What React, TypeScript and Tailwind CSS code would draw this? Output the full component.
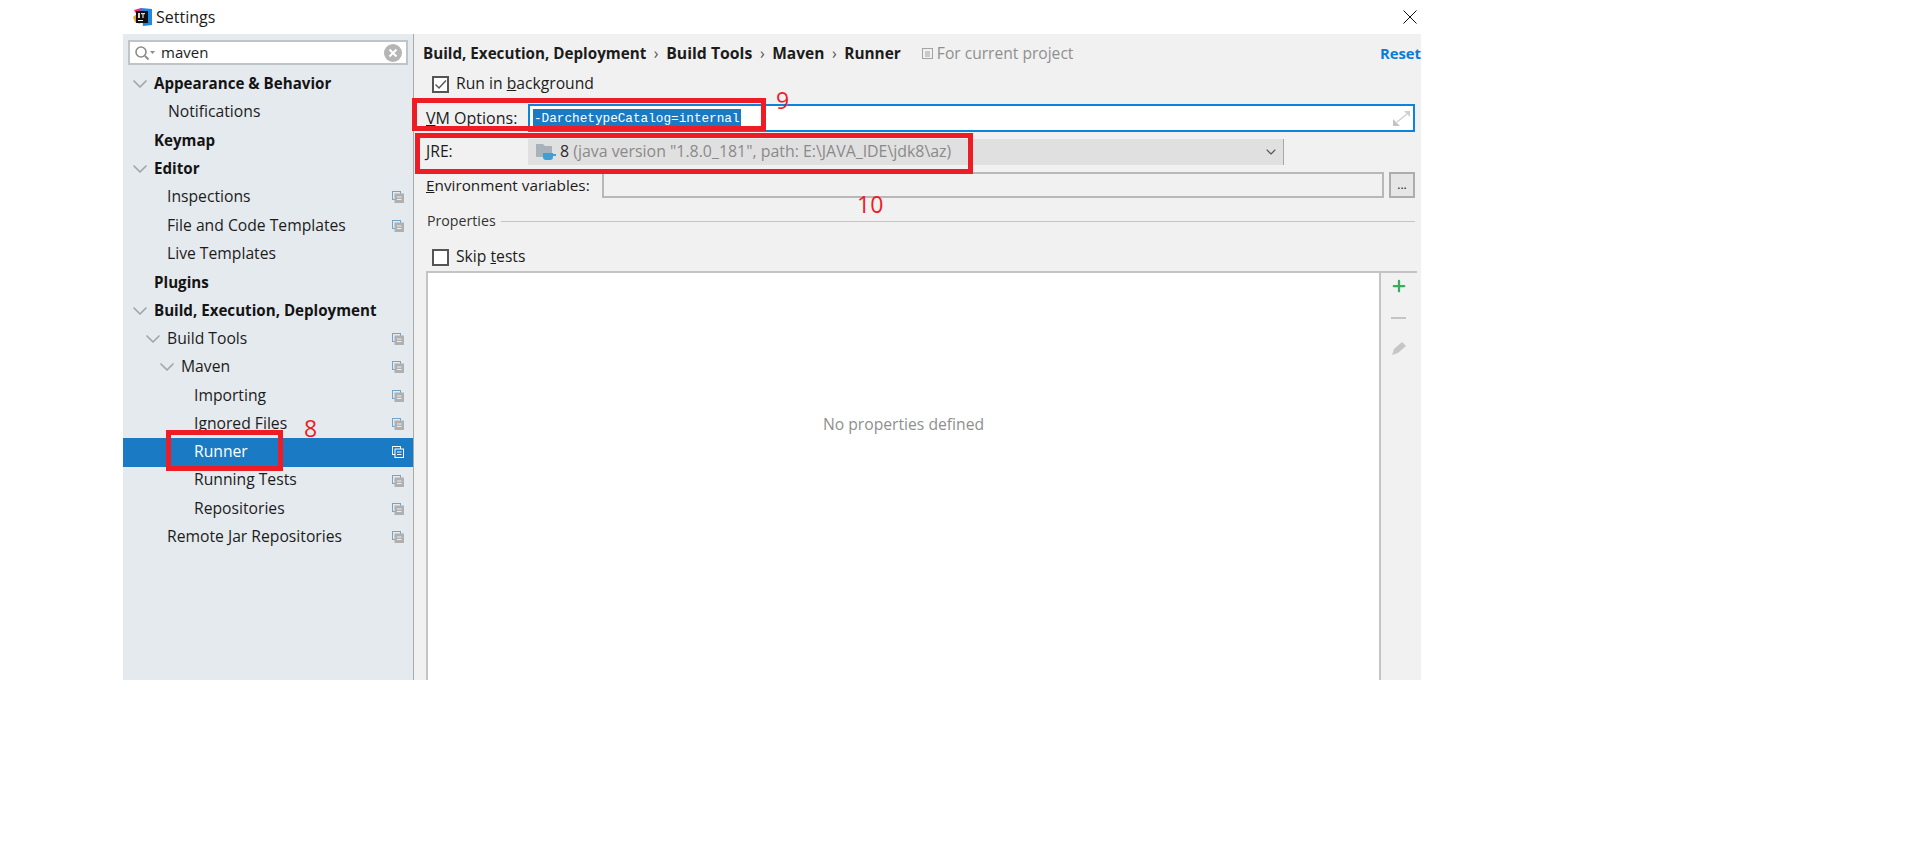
import { ChevronDown, Plus } from "lucide-react";

const font = { fontFamily: '"Open Sans", "Noto Sans", sans-serif' };

type Row = { label: string; indent: number; bold?: boolean; arrow?: boolean; icon?: boolean; selected?: boolean };

const rows: Row[] = [
  { label: "Appearance & Behavior", indent: 31, bold: true, arrow: true },
  { label: "Notifications", indent: 45 },
  { label: "Keymap", indent: 31, bold: true },
  { label: "Editor", indent: 31, bold: true, arrow: true },
  { label: "Inspections", indent: 44, icon: true },
  { label: "File and Code Templates", indent: 44, icon: true },
  { label: "Live Templates", indent: 44 },
  { label: "Plugins", indent: 31, bold: true },
  { label: "Build, Execution, Deployment", indent: 31, bold: true, arrow: true },
  { label: "Build Tools", indent: 44, arrow: true, icon: true },
  { label: "Maven", indent: 58, arrow: true, icon: true },
  { label: "Importing", indent: 71, icon: true },
  { label: "Ignored Files", indent: 71, icon: true },
  { label: "Runner", indent: 71, icon: true, selected: true },
  { label: "Running Tests", indent: 71, icon: true },
  { label: "Repositories", indent: 71, icon: true },
  { label: "Remote Jar Repositories", indent: 44, icon: true },
];

function ProjectIcon({ selected }: { selected?: boolean }) {
  return (
    <svg width="12" height="12" viewBox="0 0 12 12" className="shrink-0">
      <rect x="0.5" y="0.5" width="8" height="8" fill="none" stroke={selected ? "#ffffff" : "#6ea6d0"} strokeWidth="1" />
      <rect x="3" y="3" width="8.5" height="8.5" fill={selected ? "#1a7bc4" : "#b0b0b0"} stroke={selected ? "#ffffff" : "#b0b0b0"} strokeWidth="1" />
      <path d="M5 6h4.5M5 8.5h4.5" stroke={selected ? "#ffffff" : "#eeeeee"} strokeWidth="1" />
    </svg>
  );
}

function Checkbox({ checked }: { checked?: boolean }) {
  return (
    <span className="flex h-[17px] w-[17px] shrink-0 items-center justify-center border-2 border-[#555555] bg-white">
      {checked && (
        <svg width="13" height="13" viewBox="0 0 13 13">
          <path d="M1.5 6.5 L5 10 L12 2.5" fill="none" stroke="#555555" strokeWidth="1.4" />
        </svg>
      )}
    </span>
  );
}

function IdeaLogo() {
  return (
    <svg width="19" height="18" viewBox="0 0 19 18">
      <path d="M1 2 L8 0 L12 4 L5 9 Z" fill="#f0287a" />
      <path d="M0 9 L5 5 L7 16 L2 14 Z" fill="#f2a03a" />
      <path d="M8 0 L19 1 L19 17 L10 18 Z" fill="#1e88e5" />
      <rect x="3" y="3" width="12" height="12" fill="#111111" />
      <rect x="5" y="12" width="5" height="1" fill="#ffffff" />
      <path d="M5 5h2v5H5zM8 5h4v1.2h-1.4V10H9.4V6.2H8z" fill="#dddddd" />
    </svg>
  );
}

function JdkIcon() {
  return (
    <svg width="20" height="18" viewBox="0 0 20 18" className="shrink-0">
      <path d="M0 1 H7 L9 3 H16 V14 H0 Z" fill="#a8b2ba" />
      <path d="M7 10 H17 V14 Q17 17 14 17 H10 Q7 17 7 14 Z" fill="#3d9fd6" />
      <path d="M17 11 H20 V13 H17 Z" fill="#3d9fd6" />
    </svg>
  );
}

export default function App() {
  return (
    <div className="min-h-screen bg-white pl-[123px] text-[15.7px] text-[#1c1c1c]" style={font}>
      <div className="w-[1298px]">
        {/* Title bar */}
        <div className="flex h-[34px] items-center pl-[10px]">
          <IdeaLogo />
          <span className="ml-[4px] pb-[1px] text-[16px]">Settings</span>
          <svg width="14" height="14" viewBox="0 0 14 14" className="ml-auto mr-[4px] -mt-[1px]">
            <path d="M0.5 0.5 L13.5 13.5 M13.5 0.5 L0.5 13.5" stroke="#111111" strokeWidth="1" />
          </svg>
        </div>

        <div className="relative flex h-[646px] bg-[#f1f1f1]">
          {/* Sidebar */}
          <div className="w-[291px] shrink-0 border-r border-[#a9a9a9] bg-[#e5eaee]">
            <div className="mx-[5px] mt-[6px] mb-[5px] flex h-[25px] w-[280px] items-center border-2 border-[#bfc4c8] bg-white pl-[4px] pr-[4px]">
              <svg width="22" height="16" viewBox="0 0 22 16">
                <circle cx="7" cy="7" r="5" fill="none" stroke="#8b8b8b" strokeWidth="1.6" />
                <path d="M11 11 L14.5 14.5" stroke="#8b8b8b" strokeWidth="1.8" />
                <path d="M16 6 h5 l-2.5 3 z" fill="#8b8b8b" />
              </svg>
              <span className="ml-[5px] text-[15px] leading-none">maven</span>
              <span className="ml-auto flex h-[18px] w-[18px] items-center justify-center rounded-full bg-[#b5b5b5]">
                <svg width="10" height="10" viewBox="0 0 10 10">
                  <path d="M1.5 1.5 L8.5 8.5 M8.5 1.5 L1.5 8.5" stroke="#ffffff" strokeWidth="2" />
                </svg>
              </span>
            </div>
            {rows.map((r) => (
              <div
                key={r.label}
                className={`relative flex h-[28.33px] items-center pr-[9px] ${r.selected ? "bg-[#1a7bc4] text-white" : ""} ${r.bold ? "text-[15.15px] font-bold text-[#141414]" : ""}`}
                style={{ paddingLeft: r.indent }}
              >
                {r.arrow && (
                  <ChevronDown
                    size={24}
                    strokeWidth={1.7}
                    className="absolute top-[2px] text-[#a5a5a5]"
                    style={{ left: r.indent - 26 }}
                  />
                )}
                <span className="pb-[1px] whitespace-nowrap">{r.label}</span>
                {r.icon && (
                  <span className="ml-auto">
                    <ProjectIcon selected={r.selected} />
                  </span>
                )}
              </div>
            ))}
          </div>

          {/* Right panel */}
          <div className="flex min-w-0 flex-1 flex-col overflow-hidden">
            <div className="flex h-[38px] shrink-0 items-center pl-[9px] pt-[1px] whitespace-nowrap">
              <span className="text-[15.2px] font-bold">Build, Execution, Deployment</span>
              <span className="mx-[7.6px] text-[#555555]">›</span>
              <span className="text-[15.8px] font-bold">Build Tools</span>
              <span className="mx-[7.6px] text-[#555555]">›</span>
              <span className="text-[15.5px] font-bold">Maven</span>
              <span className="mx-[7.6px] text-[#555555]">›</span>
              <span className="text-[15.4px] font-bold">Runner</span>
              <svg width="12" height="12" viewBox="0 0 12 12" className="ml-[21px] mr-[3px]">
                <rect x="0.5" y="0.5" width="10" height="10" fill="none" stroke="#a4a4a4" />
                <path d="M3 4h5M3 6h5M3 8h5" stroke="#a4a4a4" />
              </svg>
              <span className="text-[15.6px] text-[#8f8f8f]">For current project</span>
              <span className="ml-auto text-[14.8px] font-bold text-[#0a7bd6]">Reset</span>
            </div>

            <div className="flex h-[24px] shrink-0 items-center pl-[18px]">
              <Checkbox checked />
              <span className="ml-[7px] pb-[1px]">
                Run in <u>b</u>ackground
              </span>
            </div>

            {/* VM options */}
            <div className="mt-[8px] flex h-[28px] shrink-0 items-center pl-[12px] pr-[6px]">
              <span className="w-[102px] shrink-0 pb-[1px] text-[16px]">
                <u>V</u>M Options:
              </span>
              <div className="flex h-full flex-1 items-center border-2 border-[#0a84dc] bg-white pl-[3px] pr-[3px]">
                <span
                  className="bg-[#1a7bc4] px-[1px] py-[1px] text-[12.7px] leading-[17px] text-white"
                  style={{ fontFamily: '"Liberation Mono", monospace' }}
                >
                  -DarchetypeCatalog=internal
                </span>
                <svg width="17" height="15" viewBox="0 0 17 15" className="ml-auto">
                  <path d="M0 15 V8 L7 15 Z" fill="#c4c4c4" />
                  <path d="M17 0 V6 L11 0 Z" fill="#d0d0d0" />
                  <path d="M4 11 L14 3" stroke="#d0d0d0" strokeWidth="1.4" />
                </svg>
              </div>
            </div>

            {/* JRE */}
            <div className="mt-[7px] flex h-[26px] shrink-0 items-center pl-[12px]">
              <span className="w-[102px] shrink-0 pb-[1px]">JRE:</span>
              <div className="flex h-full w-[756px] items-center border-r border-[#a8a8a8] bg-[#e0e0e0] pl-[8px] pr-[4px] text-[#8a8a8a]">
                <JdkIcon />
                <span className="ml-[4px] pb-[1px] text-[15.9px] whitespace-nowrap">
                  <span className="text-[#2a2a2a]">8</span> (java version "1.8.0_181", path: E:\JAVA_IDE\jdk8\az)
                </span>
                <ChevronDown size={16} strokeWidth={1.6} className="ml-auto text-[#555555]" />
              </div>
            </div>

            {/* Environment variables */}
            <div className="mt-[7px] flex h-[26px] shrink-0 items-center pl-[12px] pr-[6px]">
              <span className="w-[176px] shrink-0 text-[15.3px] whitespace-nowrap">
                <u>E</u>nvironment variables:
              </span>
              <div className="h-full flex-1 border-2 border-[#b8b8b8]" />
              <button className="ml-[5px] flex h-full w-[26px] items-center justify-center border-2 border-[#adadad] bg-[#e6e6e6] text-[12px] leading-none">
                ...
              </button>
            </div>

            {/* Properties */}
            <div className="mt-[12px] flex h-[22px] shrink-0 items-center pl-[13px] pr-[6px]">
              <span className="text-[14.2px] text-[#333333]">Properties</span>
              <div className="ml-[5px] h-px flex-1 bg-[#c4c4c4]" />
            </div>

            <div className="mt-[13px] flex h-[24px] shrink-0 items-center pl-[18px]">
              <Checkbox />
              <span className="ml-[7px] pb-[1px]">
                Skip <u>t</u>ests
              </span>
            </div>

            {/* Properties table */}
            <div className="ml-[12px] mr-[4px] mt-[2px] flex min-h-0 flex-1 border-t-2 border-[#c4c4c4]">
              <div className="flex flex-1 items-center justify-center border-x-2 border-[#c4c4c4] bg-white pb-[104px] text-[#8f8f8f]">
                No properties defined
              </div>
              <div className="flex w-[36px] shrink-0 flex-col items-center pt-[4px]">
                <Plus size={18} strokeWidth={3} className="mr-[1px] text-[#36ad5b]" />
                <div className="mt-[22px] mr-[1px] h-[2px] w-[15px] bg-[#c4c4c4]" />
                <svg width="16" height="16" viewBox="0 0 16 16" className="mt-[21px] mr-[1px]">
                  <path d="M1 15 L3 9 L11 2 L15 6 L7 13 Z" fill="#c6c6c6" />
                </svg>
              </div>
            </div>
          </div>
        </div>

        {/* Red annotations drawn over the screenshot */}
        <div className="pointer-events-none absolute left-[166px] top-[430px] h-[41px] w-[117px] border-[5px] border-[#ee1c25]" />
        <span className="pointer-events-none absolute left-[304px] top-[414px] text-[23px] leading-[28px] text-[#ee1c25]">8</span>
        <div className="pointer-events-none absolute left-[412px] top-[98px] h-[33px] w-[354px] border-[5px] border-[#ee1c25]" />
        <span className="pointer-events-none absolute left-[776px] top-[86px] text-[23px] leading-[28px] text-[#ee1c25]">9</span>
        <div className="pointer-events-none absolute left-[415px] top-[133px] h-[41px] w-[558px] border-[5px] border-[#ee1c25]" />
        <span className="pointer-events-none absolute left-[857px] top-[190px] text-[23px] leading-[28px] text-[#ee1c25]">10</span>
      </div>
    </div>
  );
}
